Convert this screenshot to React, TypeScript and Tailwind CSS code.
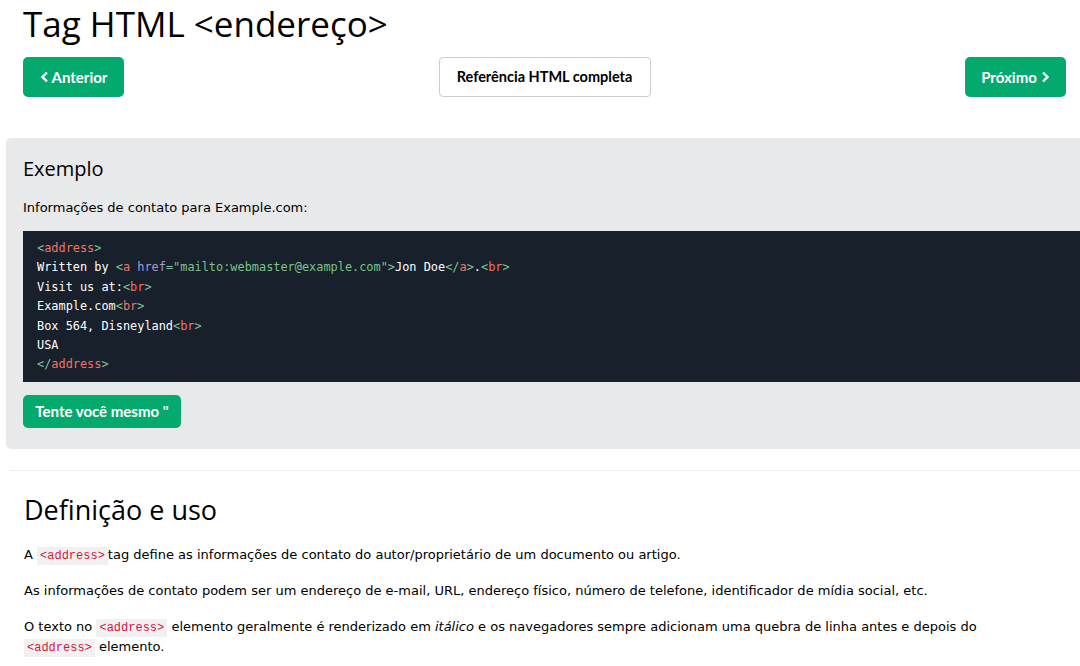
import React from "react";

const head = { fontFamily: '"Open Sans", "Noto Sans", sans-serif' };
const btn = { fontFamily: 'Lato, "Open Sans", sans-serif' };
const mono = { fontFamily: '"DejaVu Sans Mono", "Liberation Mono", monospace' };

const B = ({ c }: { c: string }) => <span className="text-[#7cc49b]">{c}</span>;
const N = ({ c }: { c: string }) => <span className="text-[#f27468]">{c}</span>;

function Tag({ name, close }: { name: string; close?: boolean }) {
  return (
    <>
      <B c={close ? "</" : "<"} />
      <N c={name} />
      <B c=">" />
    </>
  );
}

function Ic({ c }: { c: string }) {
  return (
    <code className="bg-[#f1f1f1] text-[#dc143c] px-[3px] py-[2px] text-[12px] leading-[12px]" style={{ fontFamily: '"Liberation Mono", monospace' }}>
      {c}
    </code>
  );
}

export default function App() {
  return (
    <div className="w-[1080px] h-[666px] overflow-hidden bg-white text-black" style={{ fontFamily: '"DejaVu Sans", Verdana, sans-serif' }}>
      <div className="pl-[23px] pr-[14px]">
        <h1 className="text-[35px] leading-[48px] font-normal m-0" style={head}>
          Tag HTML &lt;endereço&gt;
        </h1>
        <div className="mt-[9px] flex justify-between items-center">
          <a className="h-[40px] w-[101px] rounded-[5px] bg-[#04AA6D] text-white font-bold text-[15px] flex items-center justify-center gap-[3px]" style={btn}>
            <svg width="9" height="12" viewBox="0 0 9 12"><path d="M7 1.5 L2.5 6 L7 10.5" stroke="white" strokeWidth="2.4" fill="none" /></svg>
            Anterior
          </a>
          <a className="h-[40px] w-[212px] rounded-[4px] bg-white border border-[#cccccc] text-black font-bold text-[14.5px] flex items-center justify-center" style={btn}>
            Referência HTML completa
          </a>
          <a className="h-[40px] w-[101px] rounded-[5px] bg-[#04AA6D] text-white font-bold text-[15px] flex items-center justify-center gap-[4px]" style={btn}>
            Próximo
            <svg width="9" height="12" viewBox="0 0 9 12"><path d="M2 1.5 L6.5 6 L2 10.5" stroke="white" strokeWidth="2.4" fill="none" /></svg>
          </a>
        </div>
      </div>

      <div className="mt-[41px] ml-[6px] mr-[-20px] bg-[#E7E9EB] rounded-[5px] pl-[17px] pt-[18px] pb-[21px]">
        <h2 className="text-[20px] leading-[26px] font-normal m-0" style={head}>Exemplo</h2>
        <p className="mt-[16px] text-[13px] leading-[20px]">Informações de contato para Example.com:</p>
        <div className="mt-[13px] bg-[#17202b] text-white pl-[14px] pt-[8px] pb-[7px] text-[11.9px] leading-[19.4px] whitespace-pre" style={mono}>
          <div><Tag name="address" /></div>
          <div>
            Written by <B c="<" /><N c="a" /> <span className="text-[#a89ad8]">href</span><B c="=" />
            <span className="text-[#7cc48a]">"mailto:webmaster@example.com"</span><B c=">" />Jon Doe<Tag name="a" close />.<Tag name="br" />
          </div>
          <div>Visit us at:<Tag name="br" /></div>
          <div>Example.com<Tag name="br" /></div>
          <div>Box 564, Disneyland<Tag name="br" /></div>
          <div>USA</div>
          <div><Tag name="address" close /></div>
        </div>
        <a className="mt-[13px] h-[33px] w-[158px] rounded-[5px] bg-[#04AA6D] text-white font-bold text-[15px] flex items-center justify-center" style={btn}>
          Tente você mesmo "
        </a>
      </div>

      <div className="mt-[21px] ml-[10px] h-px bg-[#eeeeee]" />

      <div className="pl-[24px] pr-[14px]">
        <h2 className="mt-[21px] text-[27px] leading-[36px] font-normal m-0" style={head}>Definição e uso</h2>
        <p className="mt-[17px] text-[13px] leading-[20px]">
          A <Ic c="<address>" />tag define as informações de contato do autor/proprietário de um documento ou artigo.
        </p>
        <p className="mt-[16px] text-[13px] leading-[20px]">
          As informações de contato podem ser um endereço de e-mail, URL, endereço físico, número de telefone, identificador de mídia social, etc.
        </p>
        <p className="mt-[16px] text-[13px] leading-[20px] pr-[40px]">
          O texto no <Ic c="<address>" /> elemento geralmente é renderizado em <i>itálico</i> e os navegadores sempre adicionam uma quebra de linha antes e depois do <Ic c="<address>" /> elemento.
        </p>
      </div>
    </div>
  );
}
